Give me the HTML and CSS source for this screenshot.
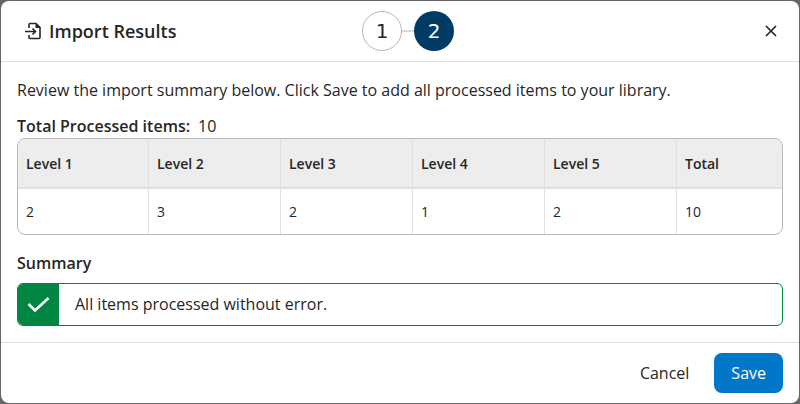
FILE: index.html
```html
<!DOCTYPE html>
<html lang="en">
  <head>
    <meta charset="UTF-8" />
    <meta name="viewport" content="width=device-width, initial-scale=1.0" />
    <title>Import Results</title>
    <link rel="stylesheet" href="styles.css">
  </head>
  <body>
    <div class="modal" role="dialog" aria-labelledby="modal-title">
      <header class="modal-header">
        <h1 class="modal-title" id="modal-title">
          <svg class="import-icon" width="18" height="18" viewBox="0 0 18 18" fill="none" stroke="currentColor" stroke-width="1.6">
            <path d="M4 6V2.500a1 1 0 0 1 1-1h6l4 4v10a1 1 0 0 1-1 1H5a1 1 0 0 1-1-1V13" />
            <path d="M10.500 1v5H16z" fill="currentColor" stroke="none" />
            <path d="M0 9.500h10.500M7.500 6.500l3 3-3 3" />
          </svg>
          Import Results
        </h1>
        <ol class="steps">
          <li class="step">1</li>
          <li class="step active" aria-current="step">2</li>
        </ol>
        <button class="close-btn" type="button" aria-label="Close">
          <svg width="12" height="12" viewBox="0 0 12 12" stroke="currentColor" stroke-width="1.7">
            <path d="M1 1l10 10M11 1L1 11" />
          </svg>
        </button>
      </header>
      <main class="modal-body">
        <p class="intro">Review the import summary below. Click Save to add all processed items to your library.</p>
        <p class="total"><strong>Total Processed items:</strong><span>10</span></p>
        <div class="table-wrapper">
          <table>
            <thead>
              <tr>
                <th scope="col" class="first-col">Level 1</th>
                <th scope="col">Level 2</th>
                <th scope="col">Level 3</th>
                <th scope="col">Level 4</th>
                <th scope="col">Level 5</th>
                <th scope="col" class="total-col">Total</th>
              </tr>
            </thead>
            <tbody>
              <tr>
                <td>2</td>
                <td>3</td>
                <td>2</td>
                <td>1</td>
                <td>2</td>
                <td>10</td>
              </tr>
            </tbody>
          </table>
        </div>
        <h2>Summary</h2>
        <div class="alert" role="status">
          <div class="alert-icon">
            <svg width="24" height="18" viewBox="0 0 24 18" fill="none" stroke="currentColor" stroke-width="2.6">
              <path d="M1.500 8l6.500 6.500L21.500 2" />
            </svg>
          </div>
          <p>All items processed without error.</p>
        </div>
      </main>
      <footer class="modal-footer">
        <button class="btn" type="button">Cancel</button>
        <button class="btn save-btn" type="button">Save</button>
      </footer>
    </div>
  </body>
</html>
```

FILE: styles.css
```css
* {
  box-sizing: border-box;
}
body {
  margin: 0;
  padding: 1px;
  background-color: #666666;
  color: #262626;
  font-family: "Open Sans", "Noto Sans", sans-serif;
  font-size: 16px;
  line-height: 24px;
}
h1,
h2,
p {
  margin: 0;
}
button {
  font: inherit;
  color: inherit;
  background: none;
  border: none;
  cursor: pointer;
}
.modal {
  background-color: #ffffff;
  border-radius: 8px;
}
.modal-header {
  display: grid;
  grid-template-columns: 1fr auto 1fr;
  align-items: center;
  padding: 10px 16px 10px 24px;
  border-bottom: 1px solid #e0e0e0;
}
.modal-title {
  display: flex;
  align-items: center;
  gap: 6px;
  font-size: 18px;
  font-weight: 600;
}
.steps {
  display: flex;
  margin: 0 0 0 8px;
  padding: 0;
  list-style: none;
  font-family: "DejaVu Sans", sans-serif;
  font-size: 20px;
}
.step {
  display: flex;
  align-items: center;
  justify-content: center;
  width: 40px;
  height: 40px;
  border: 1px solid #b8b8b8;
  border-radius: 50%;
}
.step.active {
  border: none;
  background-color: #003b64;
  color: #ffffff;
}
/* line between two steps */
.step + .step {
  position: relative;
  margin-left: 12px;
}
.step + .step::before {
  content: "";
  position: absolute;
  right: 100%;
  width: 12px;
  height: 2px;
  background-color: #d8d8d8;
}
.close-btn {
  display: flex;
  justify-self: end;
  padding: 6px;
}
.modal-body {
  padding: 16px;
}
.total {
  display: flex;
  gap: 8px;
  margin-top: 12px;
}
strong,
h2 {
  font-size: 16px;
  font-weight: 600;
}
.table-wrapper {
  border: 1px solid #b8b8b8;
  border-radius: 8px;
  overflow: hidden;
}
table {
  width: 100%;
  table-layout: fixed;
  border-collapse: separate;
  border-spacing: 0;
  font-size: 14px;
}
th,
td {
  height: 45px;
  padding: 0 8px;
  border-right: 1px solid #e0e0e0;
  text-align: left;
}
th {
  height: 50px;
  padding-top: 2px;
  background-color: #ededed;
  border-bottom: 2px solid #e0e0e0;
  font-weight: 600;
}
th:last-child,
td:last-child {
  border-right: none;
}
.first-col {
  width: 131px;
}
.total-col {
  width: 105px;
}
h2 {
  margin-top: 16px;
}
.alert {
  display: flex;
  margin-top: 8px;
  border: 1px solid #008542;
  border-radius: 6px;
  overflow: hidden;
}
.alert-icon {
  display: flex;
  align-items: center;
  justify-content: center;
  width: 41px;
  background-color: #008542;
  color: #ffffff;
}
.alert p {
  padding: 8px 16px 9px;
}
.modal-footer {
  display: flex;
  justify-content: flex-end;
  gap: 8px;
  padding: 10px 16px;
  border-top: 1px solid #e0e0e0;
}
.btn {
  height: 40px;
  padding: 0 17px;
  border-radius: 8px;
}
.save-btn {
  background-color: #0077c8;
  color: #ffffff;
}
```
